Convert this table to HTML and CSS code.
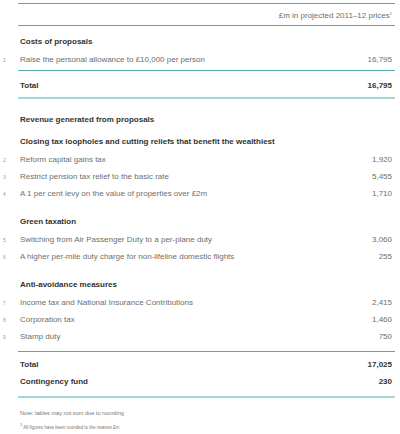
FILE: index.html
```html
<!DOCTYPE html>
<html lang="en">
<head>
    <meta charset="UTF-8">
    <meta name="viewport" content="width=device-width, initial-scale=1.0">
    <title>Costs and revenue of proposals</title>
    <link rel="stylesheet" href="styles.css">
</head>
<body>
    <div class="sheet">
        <div class="group header">
            <div class="row">
                <span class="label"></span>
                <span class="value">£m in projected 2011–12 prices<sup>1</sup></span>
            </div>
        </div>

        <div class="group costs">
            <div class="row heading"><span class="label">Costs of proposals</span></div>
            <div class="row">
                <span class="num">1</span>
                <span class="label">Raise the personal allowance to £10,000 per person</span>
                <span class="value">16,795</span>
            </div>
        </div>

        <div class="group total">
            <div class="row heading">
                <span class="label">Total</span>
                <span class="value">16,795</span>
            </div>
        </div>

        <div class="group revenue">
            <div class="row heading title"><span class="label">Revenue generated from proposals</span></div>

            <div class="row heading sub first"><span class="label">Closing tax loopholes and cutting reliefs that benefit the wealthiest</span></div>
            <div class="row">
                <span class="num">2</span>
                <span class="label">Reform capital gains tax</span>
                <span class="value">1,920</span>
            </div>
            <div class="row">
                <span class="num">3</span>
                <span class="label">Restrict pension tax relief to the basic rate</span>
                <span class="value">5,455</span>
            </div>
            <div class="row">
                <span class="num">4</span>
                <span class="label">A 1 per cent levy on the value of properties over £2m</span>
                <span class="value">1,710</span>
            </div>

            <div class="row heading sub"><span class="label">Green taxation</span></div>
            <div class="row">
                <span class="num">5</span>
                <span class="label">Switching from Air Passenger Duty to a per-plane duty</span>
                <span class="value">3,060</span>
            </div>
            <div class="row">
                <span class="num">6</span>
                <span class="label">A higher per-mile duty charge for non-lifeline domestic flights</span>
                <span class="value">255</span>
            </div>

            <div class="row heading sub"><span class="label">Anti-avoidance measures</span></div>
            <div class="row">
                <span class="num">7</span>
                <span class="label">Income tax and National Insurance Contributions</span>
                <span class="value">2,415</span>
            </div>
            <div class="row">
                <span class="num">8</span>
                <span class="label">Corporation tax</span>
                <span class="value">1,460</span>
            </div>
            <div class="row">
                <span class="num">9</span>
                <span class="label">Stamp duty</span>
                <span class="value">750</span>
            </div>
        </div>

        <div class="group total grand">
            <div class="row heading">
                <span class="label">Total</span>
                <span class="value">17,025</span>
            </div>
            <div class="row heading">
                <span class="label">Contingency fund</span>
                <span class="value">230</span>
            </div>
        </div>

        <p class="note">Note: tables may not sum due to rounding</p>
        <p class="note footnote"><sup>1</sup> All figures have been rounded to the nearest £m</p>
    </div>
</body>
</html>
```

FILE: styles.css
```css
* {
    margin: 0;
    padding: 0;
    box-sizing: border-box;
}

body {
    background-color: #ffffff;
    font-family: "Liberation Sans", Arial, sans-serif;
    font-size: 8px;
    color: #6e6e6e;
}

.sheet {
    width: 377px;
    margin-left: 18px;
    padding-top: 3px;
}

.group {
    border-bottom: 1px solid #55a9ae;
}

.header {
    border-top: 1px solid #55a9ae;
    height: 23px;
    padding-top: 3px;
}

.costs {
    padding-top: 7px;
    padding-bottom: 2px;
}

.total {
    padding-top: 6px;
    padding-bottom: 3px;
    border-bottom: 2px solid #a3d8d8;
}

.revenue {
    padding-top: 12px;
    padding-bottom: 6px;
}

.grand {
    padding-top: 4px;
    padding-bottom: 6px;
}

.row {
    display: flex;
    align-items: baseline;
    height: 17px;
    line-height: 17px;
}

.num {
    width: 18px;
    margin-left: -18px;
    padding-left: 3px;
    font-size: 5px;
    color: #9a9a9a;
}

.label {
    flex: 1;
    padding-left: 2px;
    white-space: nowrap;
}

.value {
    padding-right: 3px;
    text-align: right;
    white-space: nowrap;
}

.heading {
    font-weight: bold;
    color: #333333;
}

.costs .heading {
    margin-bottom: 1px;
}

.sub {
    margin-top: 11px;
    margin-bottom: 1px;
}

.sub.first {
    margin-top: 5px;
}

sup {
    font-size: 4px;
    line-height: 0;
    vertical-align: 3px;
}

.note {
    margin-top: 9px;
    padding-left: 2px;
    font-size: 5.6px;
    line-height: 12px;
    color: #777777;
}

.footnote {
    margin-top: 3px;
    font-size: 4.5px;
}
```
